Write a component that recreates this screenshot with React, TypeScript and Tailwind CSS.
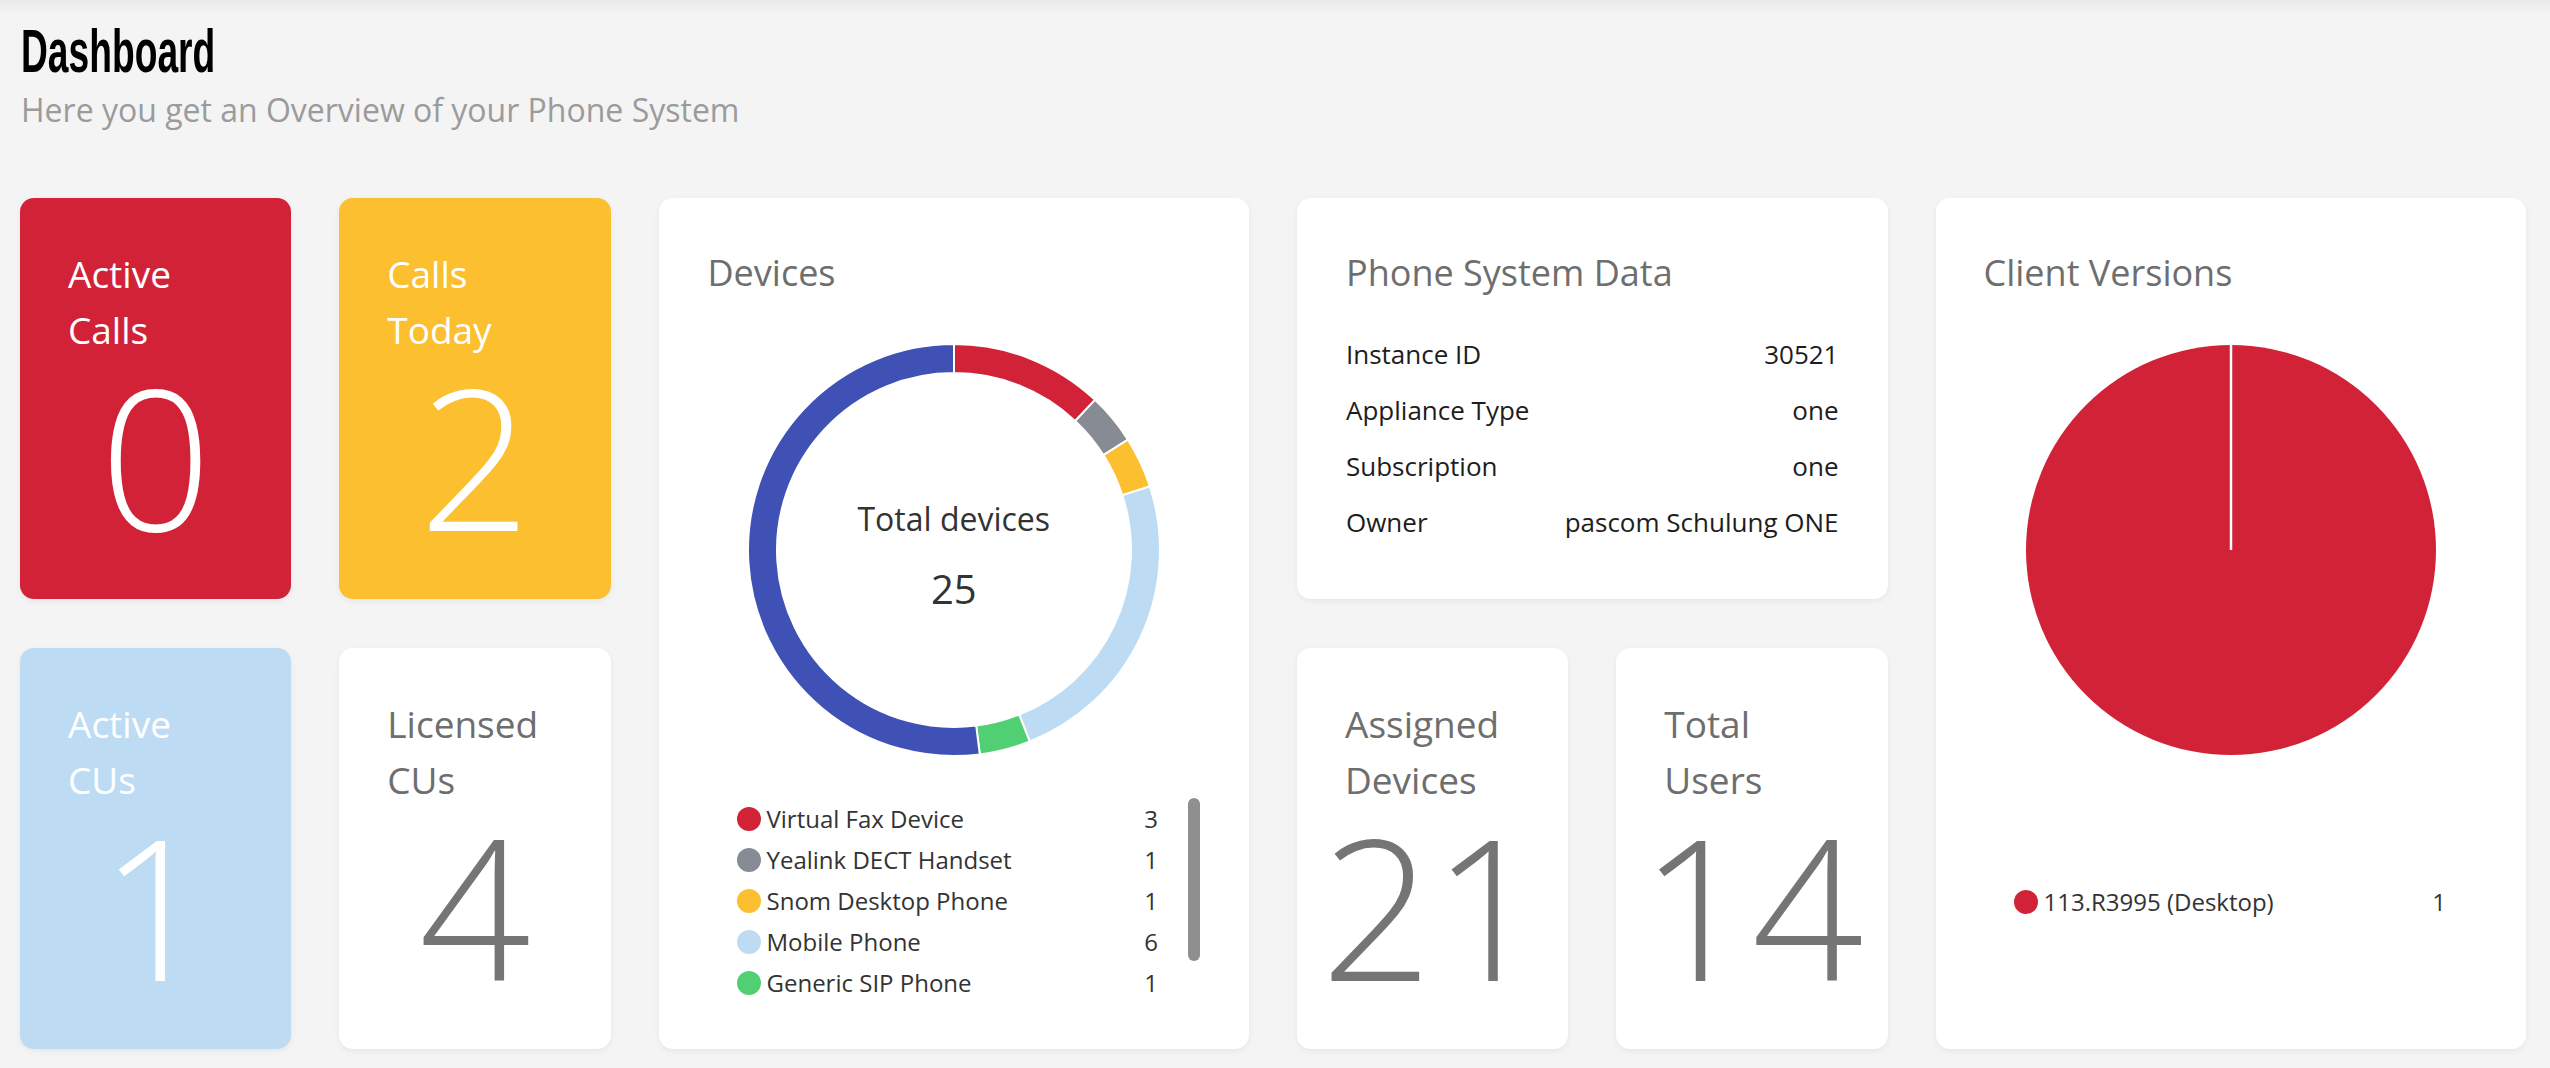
import React from 'react';

type Slice = { label: string; value: number; color: string };

// Devices doughnut — indigo slice is not in the visible (scrolled) legend
const deviceSlices: Slice[] = [
  { label: 'Virtual Fax Device', value: 3, color: '#d12237' },
  { label: 'Yealink DECT Handset', value: 1, color: '#878b94' },
  { label: 'Snom Desktop Phone', value: 1, color: '#fbbf2f' },
  { label: 'Mobile Phone', value: 6, color: '#bddcf4' },
  { label: 'Generic SIP Phone', value: 1, color: '#51cf73' },
  { label: 'pascom Desktop', value: 13, color: '#3f51b5' },
];

const phoneData = [
  ['Instance ID', '30521'],
  ['Appliance Type', 'one'],
  ['Subscription', 'one'],
  ['Owner', 'pascom Schulung ONE'],
];

function arcPath(cx: number, cy: number, r0: number, r1: number, a0: number, a1: number) {
  const p = (r: number, a: number) => [cx + r * Math.sin(a), cy - r * Math.cos(a)];
  const [x0, y0] = p(r1, a0);
  const [x1, y1] = p(r1, a1);
  const [x2, y2] = p(r0, a1);
  const [x3, y3] = p(r0, a0);
  const large = a1 - a0 > Math.PI ? 1 : 0;
  return `M${x0} ${y0} A${r1} ${r1} 0 ${large} 1 ${x1} ${y1} L${x2} ${y2} A${r0} ${r0} 0 ${large} 0 ${x3} ${y3}Z`;
}

function Doughnut({ slices }: { slices: Slice[] }) {
  const total = slices.reduce((s, x) => s + x.value, 0);
  let acc = 0;
  return (
    <svg width="412" height="412" viewBox="0 0 412 412">
      {slices.map((s) => {
        const a0 = (acc / total) * Math.PI * 2;
        acc += s.value;
        const a1 = (acc / total) * Math.PI * 2;
        return <path key={s.label} d={arcPath(206, 206, 177, 206, a0, a1)} fill={s.color} stroke="#fff" strokeWidth="2" />;
      })}
    </svg>
  );
}

function StatCard({ lines, value, box, title, num }: { lines: string[]; value: string; box: string; title: string; num: string }) {
  return (
    <div className={`rounded-[14px] shadow-[0_2px_6px_rgba(0,0,0,0.06)] pt-[48px] ${box}`}>
      <div className={`pl-[48px] text-[37px] leading-[56px] ${title}`}>
        {lines[0]}
        <br />
        {lines[1]}
      </div>
      <div className={`text-center text-[196px] leading-[194px] font-light ${num}`}>{value}</div>
    </div>
  );
}

export default function App() {
  return (
    <div className="min-h-screen bg-[linear-gradient(to_bottom,#e9e9e9_0px,#f4f4f4_14px)] font-['Open_Sans',sans-serif] pl-[20px] pr-[24px]">
      {/* header */}
      <div className="pl-[1px] pt-[15px]">
        <h1 className="inline-block origin-left scale-x-[0.6] font-['Liberation_Sans_Narrow','Liberation_Sans',sans-serif] text-[62px] font-bold leading-[72px] text-black">
          Dashboard
        </h1>
        <p className="mt-[3px] text-[32px] leading-[40px] text-[#9b9b9b]">Here you get an Overview of your Phone System</p>
      </div>

      <div className="mt-[68px] grid grid-cols-8 grid-rows-[401px_401px] gap-x-[48px] gap-y-[49px]">
        <StatCard lines={['Active', 'Calls']} value="0" box="bg-[#d12237]" title="text-white" num="text-white" />
        <StatCard lines={['Calls', 'Today']} value="2" box="bg-[#fbbf2f]" title="text-white" num="text-white" />

        {/* Devices */}
        <div className="col-span-2 row-span-2 rounded-[14px] bg-white px-[49px] pt-[51px] shadow-[0_2px_6px_rgba(0,0,0,0.06)]">
          <h2 className="text-[36px] leading-[48px] text-[#6e6e6e]">Devices</h2>
          <div className="relative mt-[47px] flex justify-center">
            <Doughnut slices={deviceSlices} />
            <div className="absolute inset-x-0 top-[153px] flex flex-col items-center text-[#333]">
              <span className="text-[32px] leading-[44px]">Total devices</span>
              <span className="mt-[22px] text-[40px] leading-[52px]">25</span>
            </div>
          </div>
          <div className="ml-[29px] mt-[42px] flex h-[205px] gap-[30px]">
            <div className="flex-1 overflow-hidden">
              {deviceSlices.slice(0, 5).map((s) => (
                <div key={s.label} className="flex h-[41px] items-center text-[24px] text-[#333]">
                  <span className="mr-[6px] h-[24px] w-[24px] rounded-full" style={{ backgroundColor: s.color }} />
                  <span>{s.label}</span>
                  <span className="ml-auto">{s.value}</span>
                </div>
              ))}
            </div>
            <div className="h-[163px] w-[12px] rounded-full bg-[#8f8f8f]" />
          </div>
        </div>

        {/* Phone System Data */}
        <div className="col-span-2 rounded-[14px] bg-white px-[49px] pt-[51px] shadow-[0_2px_6px_rgba(0,0,0,0.06)]">
          <h2 className="text-[36px] leading-[48px] text-[#6e6e6e]">Phone System Data</h2>
          <div className="mt-[29px]">
            {phoneData.map(([k, v]) => (
              <div key={k} className="flex justify-between text-[26px] leading-[56px] text-[#1d1d1d]">
                <span>{k}</span>
                <span>{v}</span>
              </div>
            ))}
          </div>
        </div>

        {/* Client Versions */}
        <div className="col-span-2 row-span-2 rounded-[14px] bg-white px-[48px] pt-[51px] shadow-[0_2px_6px_rgba(0,0,0,0.06)]">
          <h2 className="text-[36px] leading-[48px] text-[#6e6e6e]">Client Versions</h2>
          <div className="mt-[48px] flex justify-center">
            <svg width="410" height="410" viewBox="0 0 410 410">
              <circle cx="205" cy="205" r="205" fill="#d12237" />
              <line x1="205" y1="0" x2="205" y2="205" stroke="#fff" strokeWidth="2.5" />
            </svg>
          </div>
          <div className="ml-[30px] mr-[32px] mt-[44px] flex h-[205px] items-center">
            <div className="flex h-[41px] flex-1 items-center text-[24px] text-[#333]">
              <span className="mr-[6px] h-[24px] w-[24px] rounded-full bg-[#d12237]" />
              <span>113.R3995 (Desktop)</span>
              <span className="ml-auto">1</span>
            </div>
          </div>
        </div>

        <StatCard lines={['Active', 'CUs']} value="1" box="bg-[#bddcf4]" title="text-white" num="text-white" />
        <StatCard lines={['Licensed', 'CUs']} value="4" box="bg-white" title="text-[#6e6e6e]" num="text-[#757575]" />
        <StatCard lines={['Assigned', 'Devices']} value="21" box="bg-white" title="text-[#6e6e6e]" num="text-[#757575]" />
        <StatCard lines={['Total', 'Users']} value="14" box="bg-white" title="text-[#6e6e6e]" num="text-[#757575]" />
      </div>
    </div>
  );
}
